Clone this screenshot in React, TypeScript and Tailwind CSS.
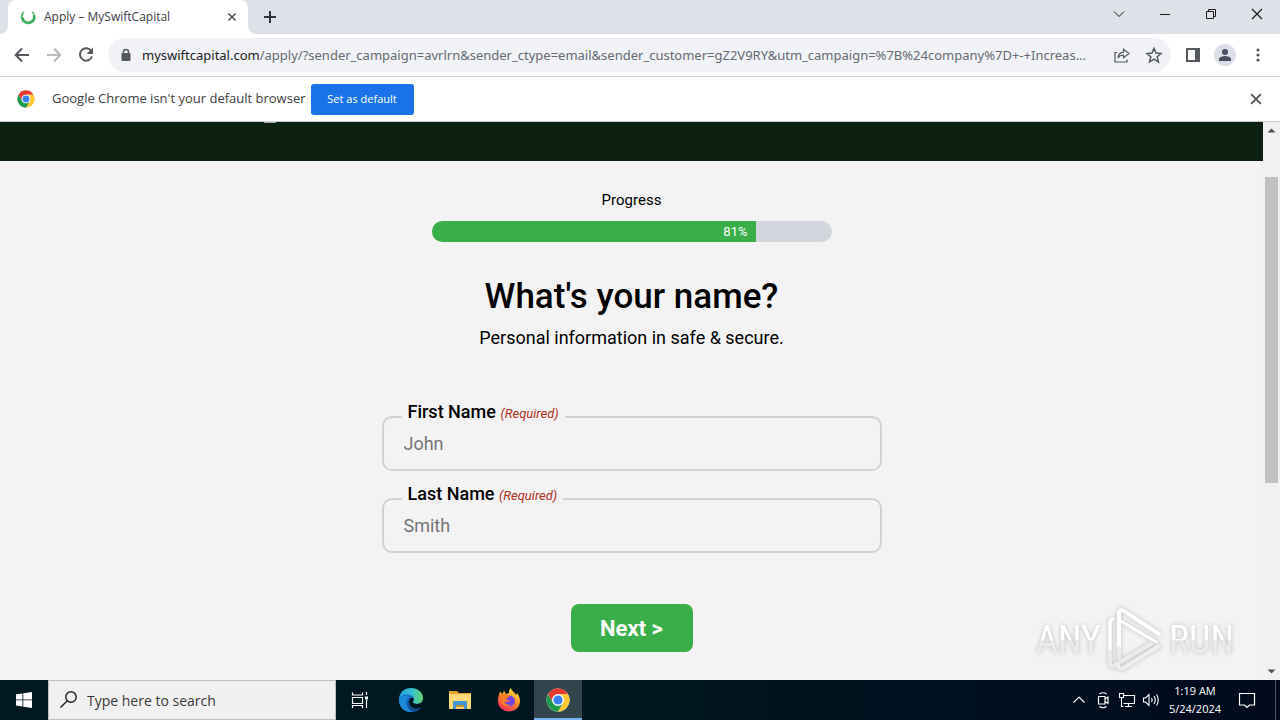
import React from "react";

type IconProps = { className?: string };

function Spinner() {
  return (
    <svg viewBox="0 0 16 16" className="size-4" fill="none" strokeLinecap="round">
      <path d="M3.500 3.200C.5 6 .8 11 4.500 13.300s9 .8 10.200-3.300c.6-2.400-.2-5-2.200-6.700" stroke="#34b35a" strokeWidth="1.500" />
      <path d="M2.600 8.500c.8 3.500 4 5.200 7 4.400 2.600-.7 4.300-3 4-6" stroke="#2f9e4a" strokeWidth="1.300" />
    </svg>
  );
}

function CloseIcon({ className = "size-4" }: IconProps) {
  return (
    <svg viewBox="0 0 16 16" className={className} fill="none" stroke="currentColor" strokeWidth="1.900">
      <path d="M3.200 3.200l9.600 9.600M12.800 3.200l-9.600 9.600" />
    </svg>
  );
}

function ChromeLogo({ className = "size-6" }: IconProps) {
  return (
    <svg viewBox="0 0 48 48" className={className}>
      <circle cx="24" cy="24" r="23" fill="#fff" />
      <path d="M4.080 12.500A23 23 0 0 1 43.920 12.500H24a11.500 11.500 0 0 0-9.960 17.250z" fill="#e33b2e" />
      <path d="M43.920 12.500A23 23 0 0 1 24 47l9.960-17.250A11.500 11.500 0 0 0 24 12.500z" fill="#fcc934" />
      <path d="M24 47A23 23 0 0 1 4.080 12.500l9.960 17.250A11.500 11.500 0 0 0 33.960 29.750z" fill="#1e9a4a" />
      <circle cx="24" cy="24" r="11.500" fill="#fff" />
      <circle cx="24" cy="24" r="9.200" fill="#3a7ff0" />
    </svg>
  );
}

function TabStrip() {
  return (
    <header className="flex h-[34px] shrink-0 items-stretch bg-[#dee1e8] text-[#202124]">
      <div className="flex w-2 items-end bg-white">
        <div className="h-full w-full rounded-br-lg bg-[#dee1e8]" />
      </div>
      <div className="flex w-60 items-center rounded-t-lg bg-white pl-3 pr-2">
        <Spinner />
        <span className="ml-2 flex-1 text-[12px] text-[#3c4043]">Apply – MySwiftCapital</span>
        <button aria-label="Close tab" className="text-[#45494d]"><CloseIcon className="size-4 p-[2px]" /></button>
      </div>
      <div className="flex w-2 items-end bg-white">
        <div className="h-full w-full rounded-bl-lg bg-[#dee1e8]" />
      </div>
      <button aria-label="New tab" className="flex w-7 items-center justify-center">
        <svg viewBox="0 0 14 14" className="size-[14px]" stroke="#30343a" strokeWidth="2"><path d="M7 1v12M1 7h12" /></svg>
      </button>
      <div className="ml-auto flex pb-[6px] text-[#1b1b1b]">
        <button aria-label="Search tabs" className="flex w-[46px] items-center justify-center">
          <svg viewBox="0 0 12 12" className="size-3" fill="none" stroke="currentColor"><path d="M1 3.500l5 5 5-5" /></svg>
        </button>
        <button aria-label="Minimize" className="flex w-[46px] items-center justify-center">
          <svg viewBox="0 0 12 12" className="size-3" stroke="currentColor"><path d="M1 6.500h10" /></svg>
        </button>
        <button aria-label="Restore" className="flex w-[46px] items-center justify-center">
          <svg viewBox="0 0 12 12" className="size-3" fill="none" stroke="currentColor"><path d="M1.500 3.500h7v7h-7zM3.500 3.500v-2h7v7h-2" /></svg>
        </button>
        <button aria-label="Close" className="flex w-[46px] items-center justify-center">
          <svg viewBox="0 0 12 12" className="size-3" stroke="currentColor" strokeWidth="1.200"><path d="M1 1l10 10M11 1L1 11" /></svg>
        </button>
      </div>
    </header>
  );
}

function Toolbar() {
  return (
    <nav className="flex h-[43px] shrink-0 items-center border-b border-[#d5d7da] bg-white pr-[14px] pl-3 text-[#54585d]">
      <button aria-label="Back">
        <svg viewBox="0 0 20 20" className="size-5" fill="none" stroke="currentColor" strokeWidth="2"><path d="M17 10H4M10 3.500L3.700 10l6.300 6.500" /></svg>
      </button>
      <button aria-label="Forward" className="ml-3 text-[#b8babd]">
        <svg viewBox="0 0 20 20" className="size-5" fill="none" stroke="currentColor" strokeWidth="2"><path d="M3 10h13M10 3.500l6.300 6.500-6.300 6.500" /></svg>
      </button>
      <button aria-label="Reload" className="ml-3">
        <svg viewBox="0 0 20 20" className="size-5" fill="none" stroke="currentColor" strokeWidth="2"><path d="M15.300 6A6.200 6.200 0 1 0 16 11.500" /><path d="M17 2.500V9h-6.500z" fill="currentColor" stroke="none" /></svg>
      </button>
      <div className="ml-3 flex h-[34px] min-w-0 flex-1 items-center rounded-full bg-[#f0f2f5] pl-3 pr-2">
        <svg viewBox="0 0 12 14" className="h-[14px] w-3 shrink-0"><path d="M3.500 6V4a2.500 2.500 0 0 1 5 0v2" fill="none" stroke="currentColor" strokeWidth="1.500" /><rect x="1.500" y="5" width="9" height="8" rx="1" fill="currentColor" /></svg>
        <p className="ml-[10px] min-w-0 flex-1 truncate pt-px font-['Noto_Sans',sans-serif] text-[13px] text-[#666b70]">
          <span className="text-[#202124]">myswiftcapital.com</span>/apply/?sender_campaign=avrlrn&amp;sender_ctype=email&amp;sender_customer=gZ2V9RY&amp;utm_campaign=%7B%24company%7D+-+Increas...
        </p>
        <button aria-label="Share this page" className="ml-3">
          <svg viewBox="0 0 18 18" className="size-[18px]" fill="none" stroke="currentColor" strokeWidth="1.200"><path d="M4 6.500H2v9.500h12v-2.500M5 12c.3-4 2.500-5.800 5.500-5.900V3.200L16 7.500l-5.500 4.300V9C8 9 6.300 9.800 5 12z" /></svg>
        </button>
        <button aria-label="Bookmark this tab" className="ml-[14px]">
          <svg viewBox="0 0 18 18" className="size-[18px]" fill="none" stroke="currentColor" strokeWidth="1.500"><path d="M9 2.400l2 4.700 5 .4-3.800 3.300 1.200 5L9 13.100l-4.400 2.700 1.200-5L2 7.500l5-.4z" /></svg>
        </button>
      </div>
      <button aria-label="Side panel" className="ml-[14px]">
        <svg viewBox="0 0 16 16" className="size-4"><path d="M2 2h12v12H2z" fill="none" stroke="currentColor" strokeWidth="2" /><path d="M10 2h5v12h-5z" fill="currentColor" /></svg>
      </button>
      <button aria-label="Profile" className="ml-[13px] flex size-[22px] items-center justify-center rounded-full bg-[#dcdfe7] text-[#484f60]">
        <svg viewBox="0 0 14 14" className="size-[14px]" fill="currentColor"><circle cx="7" cy="4" r="3" /><path d="M1 13v-2c0-2 4-3 6-3s6 1 6 3v2z" /></svg>
      </button>
      <button aria-label="Chrome menu" className="ml-[14px]">
        <svg viewBox="0 0 16 16" className="size-4" fill="currentColor"><circle cx="8" cy="3" r="1.600" /><circle cx="8" cy="8" r="1.600" /><circle cx="8" cy="13" r="1.600" /></svg>
      </button>
    </nav>
  );
}

function DefaultBrowserBar() {
  return (
    <div className="flex h-[45px] shrink-0 items-center border-b border-[#c9cbcd] bg-white pl-[17px] pr-4">
      <ChromeLogo className="size-[18px]" />
      <span className="ml-[17px] text-[13px] text-[#3c4043]">Google Chrome isn't your default browser</span>
      <button className="ml-[5px] h-[31px] w-[103px] rounded-[3px] bg-[#1a73e8] text-[11px] text-white">Set as default</button>
      <button aria-label="Dismiss" className="ml-auto text-[#505459]"><CloseIcon /></button>
    </div>
  );
}

function NameField({ id, label, placeholder }: { id: string; label: string; placeholder: string }) {
  return (
    <div className="relative">
      <label htmlFor={id} className="absolute -top-4 left-5 bg-[#f3f3f3] px-[6px] text-[18px] leading-6 font-medium text-black">
        {label} <span className="text-[13px] font-normal text-[#b0301c] italic">(Required)</span>
      </label>
      <input id={id} placeholder={placeholder} className="block h-[55px] w-full rounded-[10px] border-2 border-[#d2d2d4] bg-transparent px-5 text-[18px] text-black placeholder:text-[#757575]" />
    </div>
  );
}

function Page() {
  return (
    <main className="min-w-0 flex-1 overflow-hidden font-['Roboto',sans-serif] text-black">
      <div className="h-[39px] bg-[#0c2011]">
        <div className="ml-[264px] h-px w-3 bg-[#a9b3ab]" />
      </div>
      <form className="mx-auto flex max-w-[500px] flex-col items-center pt-[27px]" onSubmit={(e) => e.preventDefault()}>
        <p className="text-[15px] leading-6">Progress</p>
        <div role="progressbar" aria-label="Progress" aria-valuenow={81} aria-valuemin={0} aria-valuemax={100} className="mt-[9px] h-[21px] w-[400px] overflow-hidden rounded-full bg-[#d2d5dc]">
          <div className="h-full w-[81%] bg-[#3aae49] pr-2 text-right text-[13px] leading-[21px] text-white">81%</div>
        </div>
        <h1 className="mt-8 text-[35px] leading-[46px] font-medium">What's your name?</h1>
        <p className="mt-1 text-[18px] leading-7">Personal information in safe &amp; secure.</p>
        <div className="mt-16 flex w-full flex-col gap-[27px]">
          <NameField id="first-name" label="First Name" placeholder="John" />
          <NameField id="last-name" label="Last Name" placeholder="Smith" />
        </div>
        <button className="mt-[51px] h-12 w-[122px] rounded-lg bg-[#3aae49] text-[22px] font-bold text-white">Next &gt;</button>
      </form>
    </main>
  );
}

function ScrollBar() {
  return (
    <div className="flex w-[17px] shrink-0 flex-col items-center bg-[#f1f1f1] text-[#505050]">
      <svg viewBox="0 0 17 17" className="size-[17px]" fill="currentColor"><path d="M4.500 10.500h8l-4-4z" /></svg>
      <div className="flex w-[13px] flex-1 flex-col pt-[38px]">
        <div className="h-[63%] bg-[#c1c1c1]" />
      </div>
      <svg viewBox="0 0 17 17" className="size-[17px]" fill="currentColor"><path d="M4.500 6.500h8l-4 4z" /></svg>
    </div>
  );
}

function Watermark() {
  return (
    <div className="pointer-events-none absolute right-[46px] bottom-2 flex items-center gap-1 font-['Roboto_Condensed','Roboto',sans-serif] text-[38px] leading-none drop-shadow-[0_0_2px_#bcbcbc]">
      <span className="bg-linear-to-b from-white from-50% to-[#ebebeb] to-50% bg-clip-text text-transparent">ANY</span>
      <svg viewBox="0 0 60 64" className="h-16 w-[60px]" fill="none" strokeWidth="4" strokeLinejoin="round" strokeLinecap="round">
        <path d="M5 15v40c0 3 3 4 5 2L46 36" stroke="#ebebeb" />
        <path d="M13 57c0 5 4 4 7 2l34-21" stroke="#efefef" />
        <path d="M14 46V5c0-3 3-3 5-2l35 23" stroke="#ffffff" />
        <path d="M14 12l37 22M5 40V15c0-3 1-4 3-4" stroke="#ffffff" strokeWidth="3" />
        <path d="M14 50V40" stroke="#ebebeb" />
      </svg>
      <span className="bg-linear-to-b from-white from-50% to-[#ebebeb] to-50% bg-clip-text text-transparent">RUN</span>
    </div>
  );
}

function EdgeLogo() {
  return (
    <svg viewBox="0 0 24 24" className="size-6">
      <defs>
        <linearGradient id="edge-top" x1="0" x2="1"><stop stopColor="#279fe0" /><stop offset=".55" stopColor="#35c1d0" /><stop offset="1" stopColor="#63d66b" /></linearGradient>
      </defs>
      <path d="M0 12C0 4 5.500 0 12 0c7 0 12 4.500 12 10 0 4-3 6-6.500 6-2 0-3.800-.7-3.800-1.700 0-.7 1-1 1-2.800C14.700 8.500 12 7 8.500 7 4 7 1 9 0 12z" fill="url(#edge-top)" />
      <path d="M0 12C1 8.500 4 6.500 8.500 6.500c3 0 5.500 1.600 6.200 4-1-1-3-.8-4 .5-1.700 2.200-.5 8 4.300 9.500 2.500.7 5.500.2 7-1.200C20 22.500 16 24 12 24 5 24 0 18.500 0 12z" fill="#1473c5" />
      <path d="M9.200 8.500C5 12 6 21.500 13.500 23.900 5 24.500 0 19 0 12c1.500-4 5.700-4.500 9.200-3.500z" fill="#1d8bd8" />
      <path d="M10.700 11c-1.700 2.200-.5 8 4.300 9.500 2.500.7 5 .2 7-1.200-1.500 2.700-4.500 4.200-7.500 4.500C8 21.500 7 14 10.700 11z" fill="#124e91" />
      <path d="M11 11.300c1-1.500 3-1.800 3.700-.6 0 1.600-1 2.300-1 3 0 2 4 2.800 7.500 1.700-.5 1.800-2.200 2.600-4 2.600-4.500.2-6.700-3-6.200-6.700z" fill="#001821" />
    </svg>
  );
}

function FolderIcon() {
  return (
    <svg viewBox="0 0 24 24" className="size-6">
      <path d="M1 3h8l2 2h12v16H1z" fill="#e2a22d" />
      <path d="M1 6h22v15H1z" fill="#fbd978" />
      <path d="M5 21v-6.500c0-1 .5-1.500 1.500-1.500h11c1 0 1.500.5 1.500 1.500V21h-3v-4H8v4z" fill="#4196d4" />
      <path d="M8 17h8v2H8z" fill="#c8932f" />
    </svg>
  );
}

function FirefoxLogo() {
  return (
    <svg viewBox="0 0 24 24" className="size-6">
      <defs>
        <linearGradient id="fox" x1=".8" y1="0" x2=".25" y2="1"><stop stopColor="#fff04a" /><stop offset=".45" stopColor="#ff9428" /><stop offset="1" stopColor="#f5275f" /></linearGradient>
      </defs>
      <path d="M3 3.500L5.500 6 7 2.500 9 6l3-1c-.3-2 .7-4 2-5 .5 3 3.500 4 5 7l1-2c2 3 3 5 3 8 0 6-5 10.500-11 10.500S1 19 1 13c0-3.500.8-6.500 2-9.500z" fill="url(#fox)" />
      <path d="M7 11.500c0-3 2-4.500 5-4 4 .2 6 2.500 6 5.500s-2.500 5.300-5.500 5.300S7 16 7 13z" fill="#7543e5" />
      <path d="M3 9c1-2 4-3 6-2.300 1.200.5 2 .8 4 .8 0 2-3.500 2-3.500 3.700 0 1.300 2 1.300 3.500.8-.7 2.700-4.700 2.300-5.500 1 0 2.700 3 4.700 6 3.500-2.500 3-7 2-8.500-1S4 10.500 3 9z" fill="#ff7a28" />
    </svg>
  );
}

function Taskbar() {
  return (
    <footer className="flex h-10 shrink-0 items-stretch bg-linear-to-r from-[#00191f] via-[#001720] to-[#000a1c] text-white">
      <button aria-label="Start" className="flex w-12 items-center justify-center">
        <svg viewBox="0 0 16 16" className="size-4" fill="white"><path d="M0 2.300L6.500 1.400v6.100H0zM7.300 1.300L16 0v7.500H7.300zM0 8.300h6.500v6.200L0 13.600zM7.300 8.300H16V16l-8.700-1.200z" /></svg>
      </button>
      <label className="flex w-72 items-center border border-[#bfbfbf] bg-[#f0f0f0] pl-[10px]">
        <svg viewBox="0 0 20 20" className="size-5" fill="none" stroke="#202020" strokeWidth="1.400"><circle cx="12" cy="7" r="5.200" /><path d="M8.300 10.800L1.500 17.500" /></svg>
        <input aria-label="Search" placeholder="Type here to search" className="ml-2 min-w-0 flex-1 bg-transparent text-[14px] text-[#303030] placeholder:text-[#3a3a3a]" />
      </label>
      <button aria-label="Task view" className="flex w-12 items-center justify-center">
        <svg viewBox="0 0 18 18" className="size-[18px]" fill="none" stroke="white" strokeWidth="1.200"><path d="M1.500 1.500V4h10V1.500M1.500 6.500h10v6h-10zM1.500 17v-2.500h10V17M15.500 1v3M15.500 9v8" /><path d="M14 5.500h3v3h-3z" fill="white" stroke="none" /></svg>
      </button>
      <button aria-label="Microsoft Edge" className="ml-[3px] flex w-12 items-center justify-center"><EdgeLogo /></button>
      <button aria-label="File Explorer" className="flex w-[49px] items-center justify-center"><FolderIcon /></button>
      <button aria-label="Firefox" className="flex w-[49px] items-center justify-center"><FirefoxLogo /></button>
      <button aria-label="Google Chrome" className="ml-px flex w-12 items-center justify-center border-b-2 border-[#76b5ed] bg-[#33454d] pt-[2px]"><ChromeLogo /></button>
      <div className="ml-auto flex items-center">
        <svg viewBox="0 0 16 16" className="size-4" fill="none" stroke="white" strokeWidth="1.200"><path d="M2.500 10.500L8 5l5.500 5.500" /></svg>
        <svg viewBox="0 0 16 18" className="ml-2 h-[18px] w-4" fill="none" stroke="white" strokeWidth="1.200"><path d="M3.500 5.500h6.500v7.500H3.500zM10 8l3-2v6.500l-3-2M4.500 3q3.500-2.500 7 0M4.500 15.500q3.500 2.500 7 0" /></svg>
        <svg viewBox="0 0 18 18" className="ml-[7px] size-[18px]" fill="none" stroke="white" strokeWidth="1.100"><path d="M6 4.500h10.500v8H5.500M10.500 12.500v3M7 15.500h7M1.500 2.500h4v4h-4zM3.500 6.500v9h2" /></svg>
        <svg viewBox="0 0 18 18" className="ml-[6px] size-[18px]" fill="none" stroke="white" strokeWidth="1.100"><path d="M1.500 7h2L7 3.500v11L3.500 11h-2zM9.500 7q1.200 2 0 4M12 5q2.500 4 0 8M14.500 3.500q3.500 5.500 0 11" /></svg>
        <div className="ml-2 w-[54px] text-center text-[11px] leading-[18px] whitespace-nowrap"><div>1:19 AM</div><div>5/24/2024</div></div>
        <button aria-label="Notifications" className="mr-[19px] ml-4">
          <svg viewBox="0 0 18 18" className="size-[18px]" fill="none" stroke="white" strokeWidth="1.200"><path d="M1.500 2.500h15v11.500h-5L9 16.500 6.500 14h-5z" /></svg>
        </button>
        <div className="mr-1 h-10 w-px bg-[#4c5664]" />
      </div>
    </footer>
  );
}

export default function App() {
  return (
    <div className="flex h-screen flex-col overflow-hidden bg-[#f3f3f3] font-['Open_Sans','Noto_Sans',sans-serif]">
      <TabStrip />
      <Toolbar />
      <DefaultBrowserBar />
      <div className="relative flex min-h-0 flex-1">
        <Page />
        <ScrollBar />
        <Watermark />
      </div>
      <Taskbar />
    </div>
  );
}
